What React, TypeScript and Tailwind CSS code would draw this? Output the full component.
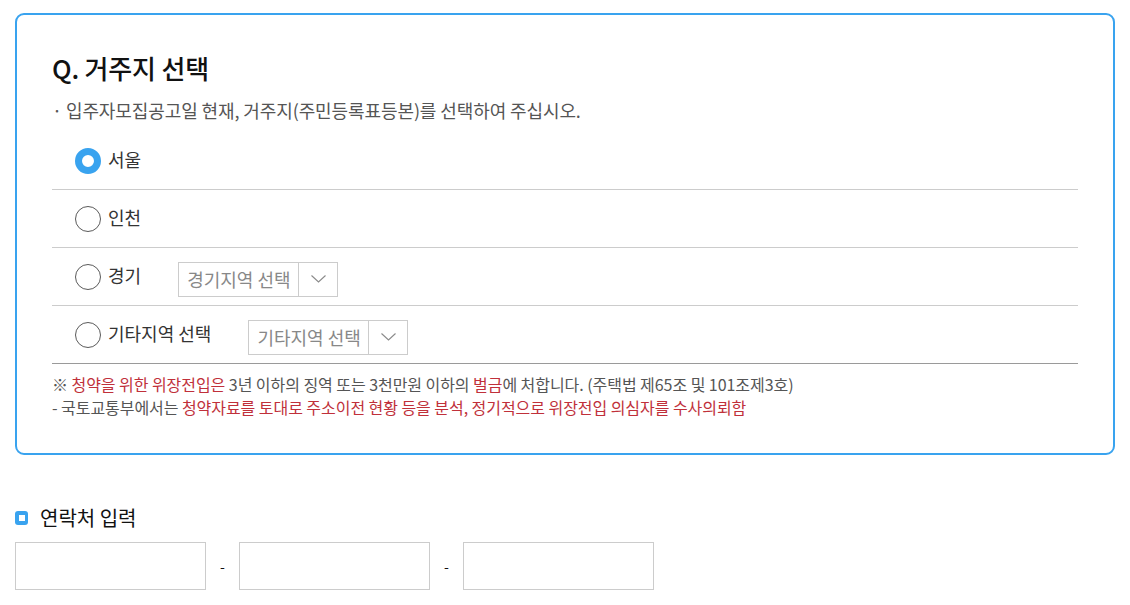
const regions = [
    { id: "seoul", label: "서울", checked: true },
    { id: "incheon", label: "인천" },
    { id: "gyeonggi", label: "경기", select: "경기지역 선택" },
    { id: "etc", label: "기타지역 선택", select: "기타지역 선택" }
];

function Radio({ checked }: { checked?: boolean }) {
    return checked ? (
        <span className="w-[26px] h-[26px] rounded-full border-[7px] border-[#39a3ef] bg-white flex-shrink-0" />
    ) : (
        <span className="w-[26px] h-[26px] rounded-full border-[1.5px] border-[#5a5a5a] bg-white flex-shrink-0" />
    );
}

export default function App() {
    return (
        <div className="w-[1130px] h-[605px] bg-white px-[15px] pt-[13px] font-['Noto_Sans_CJK_KR','Noto_Sans',sans-serif] overflow-hidden">
            <div className="w-[1100px] border-2 border-[#39a3ef] rounded-[9px] pl-[35px] pr-[35px] pt-[37px] pb-[34px]">
                <h2 className="text-[26px] leading-[32px] font-medium text-[#111] tracking-[-0.2px]">Q. 거주지 선택</h2>
                <p className="mt-[14px] text-[18px] leading-[24px] text-[#555] tracking-[-0.1px]">
                    · 입주자모집공고일 현재, 거주지(주민등록표등본)를 선택하여 주십시오.
                </p>

                <ul className="mt-[10px]">
                    {regions.map((r, i) => (
                        <li
                            key={r.id}
                            className={`h-[58px] flex items-center pl-[23px] border-b ${i === regions.length - 1 ? "border-[#9a9a9a]" : "border-[#cccccc]"}`}
                        >
                            <Radio checked={r.checked} />
                            <span className="ml-[7px] text-[18px] text-[#333] -mt-[3px]">{r.label}</span>
                            {r.select && (
                                <div className="ml-[37px] mt-[5px] flex h-[35px] border border-[#cccccc] bg-white">
                                    <span className="w-[119px] pl-[8px] flex items-center text-[18px] text-[#888]">
                                        {r.select}
                                    </span>
                                    <span className="w-[39px] border-l border-[#cccccc] flex items-center justify-center">
                                        {/* chevron */}
                                        <svg width="15" height="8" viewBox="0 0 15 8" fill="none">
                                            <path d="M0.5 0.5 L7.5 7 L14.5 0.5" stroke="#8a8a8a" strokeWidth="1.1" />
                                        </svg>
                                    </span>
                                </div>
                            )}
                        </li>
                    ))}
                </ul>

                <div className="mt-[9px] text-[16px] leading-[23px] text-[#555] tracking-[-0.05px]">
                    <p>
                        ※ <span className="text-[#c0303a]">청약을 위한 위장전입은</span> 3년 이하의 징역 또는 3천만원 이하의{" "}
                        <span className="text-[#c0303a]">벌금</span>에 처합니다. (주택법 제65조 및 101조제3호)
                    </p>
                    <p>
                        - 국토교통부에서는 <span className="text-[#c0303a]">청약자료를 토대로 주소이전 현황 등을 분석, 정기적으로 위장전입 의심자를 수사의뢰함</span>
                    </p>
                </div>
            </div>

            <div className="mt-[50px] flex items-center">
                <span className="w-[13px] h-[14px] rounded-[3px] bg-[#39a3ef] flex items-center justify-center">
                    <span className="w-[6px] h-[6px] bg-white" />
                </span>
                <h3 className="ml-[12px] text-[20px] leading-[26px] text-[#111]">연락처 입력</h3>
            </div>

            <div className="mt-[11px] flex items-center">
                <input className="w-[191px] h-[48px] border border-[#cccccc] outline-none" />
                <span className="w-[33px] text-center text-[14px] text-[#111]">-</span>
                <input className="w-[191px] h-[48px] border border-[#cccccc] outline-none" />
                <span className="w-[33px] text-center text-[14px] text-[#111]">-</span>
                <input className="w-[191px] h-[48px] border border-[#cccccc] outline-none" />
            </div>
        </div>
    );
}
